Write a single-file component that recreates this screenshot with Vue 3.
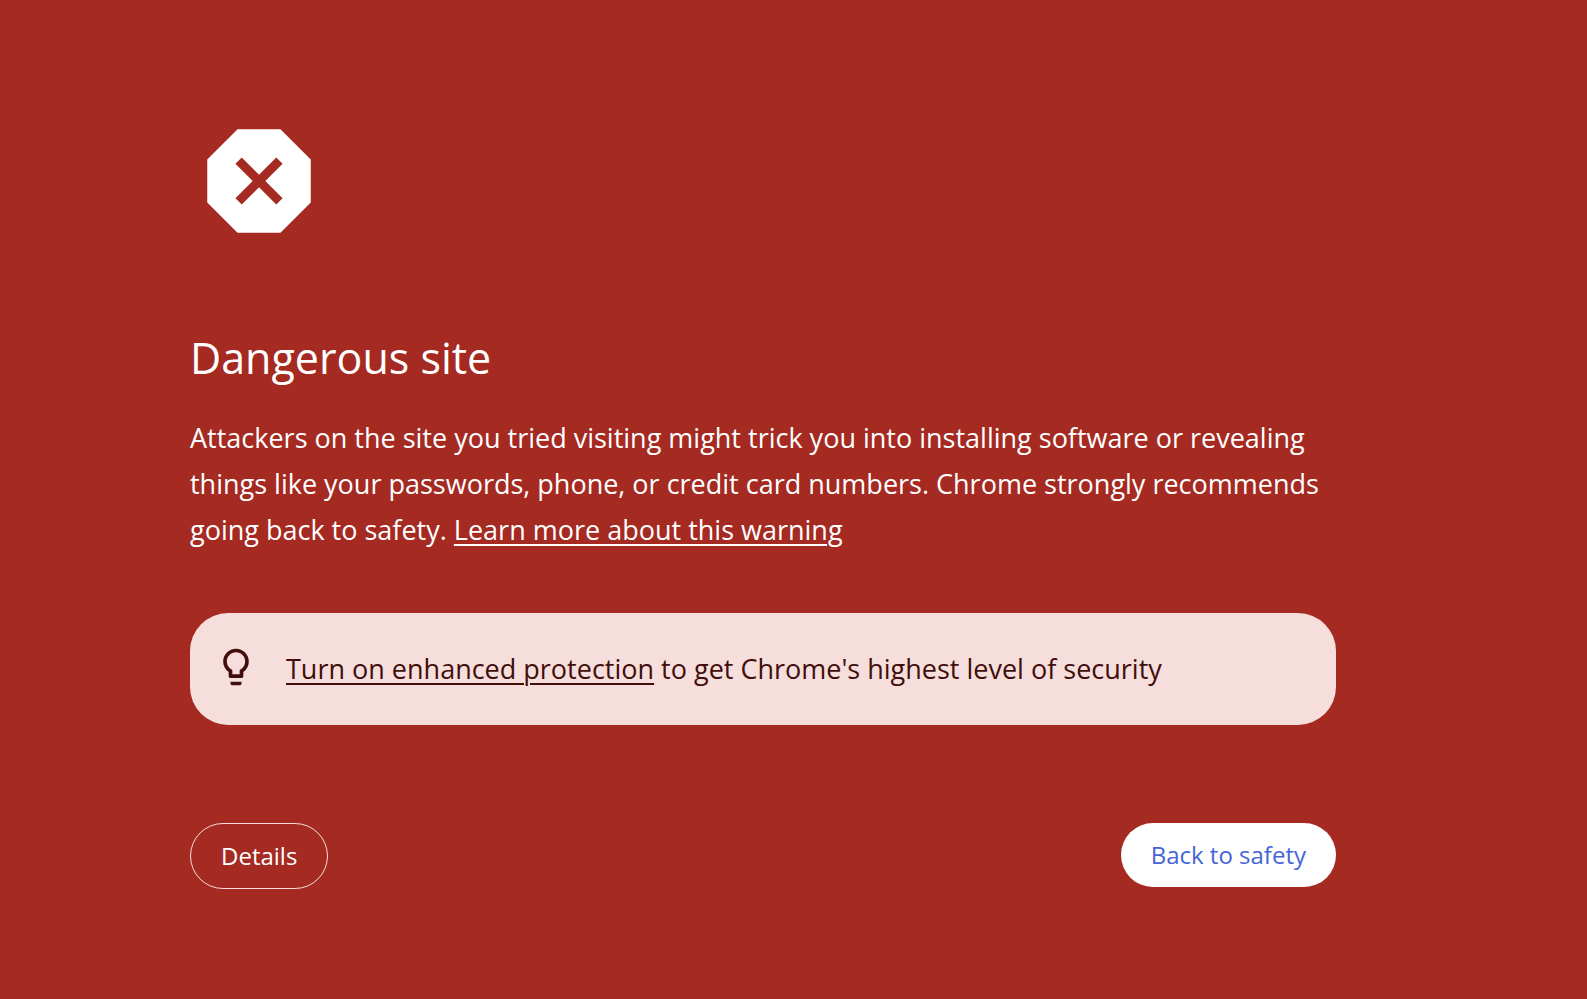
<template>
  <main class="interstitial">
    <!-- Warning octagon with the cross cut out -->
    <svg class="danger-icon" viewBox="0 0 24 24" fill="currentColor" aria-hidden="true">
      <path fill-rule="evenodd" d="M15.73 3H8.27L3 8.27v7.46L8.27 21h7.46L21 15.73V8.27L15.73 3zM9 7.9l3 3 3-3L16.1 9l-3 3 3 3-1.1 1.1-3-3-3 3L7.9 15l3-3-3-3L9 7.9z" />
    </svg>

    <h1 class="title">Dangerous site</h1>
    <p class="message">
      Attackers on the site you tried visiting might trick you into installing software or revealing things like your passwords, phone, or credit card numbers. Chrome strongly recommends going back to safety. <a href="#">Learn more about this warning</a>
    </p>

    <!-- Enhanced protection promo -->
    <div class="promo">
      <svg class="bulb-icon" viewBox="0 0 24 24" fill="currentColor" aria-hidden="true">
        <path d="M9 21c0 .55.45 1 1 1h4c.55 0 1-.45 1-1v-1H9v1zm3-19C8.14 2 5 5.14 5 9c0 2.38 1.19 4.47 3 5.74V17c0 .55.45 1 1 1h6c.55 0 1-.45 1-1v-2.26c1.81-1.27 3-3.36 3-5.74 0-3.86-3.14-7-7-7zm2.85 11.1l-.85.6V16h-4v-2.3l-.85-.6C7.8 12.16 7 10.63 7 9c0-2.76 2.24-5 5-5s5 2.24 5 5c0 1.63-.8 3.16-2.15 4.1z" />
      </svg>
      <p class="promo-text">
        <a href="#">Turn on enhanced protection</a> to get Chrome's highest level of security
      </p>
    </div>

    <div class="actions">
      <button type="button" class="btn details-btn">Details</button>
      <button type="button" class="btn safety-btn">Back to safety</button>
    </div>
  </main>
</template>

<script setup>
</script>

<style>
body {
  margin: 0;
  background: #a52a22;
}
</style>

<style scoped>
.interstitial {
  padding: 112px 251px 96px 190px;
  color: #fff;
  font-family: "Segoe UI", "Open Sans", "Noto Sans", sans-serif;
}

.danger-icon {
  display: block;
  width: 138px;
  height: 138px;
}

.title {
  margin: 76px 0 25px;
  font-size: 43px;
  font-weight: 400;
  line-height: 64px;
}

.message {
  margin: 0;
  font-size: 27px;
  line-height: 46px;
}

a {
  color: inherit;
  text-decoration-thickness: 2px;
  text-underline-offset: 4px;
}

.promo {
  display: flex;
  align-items: flex-start;
  gap: 28px;
  margin-top: 60px;
  padding: 32px 24px;
  border-radius: 38px;
  background: #f6dedc;
  color: #410e0b;
}

.bulb-icon {
  flex-shrink: 0;
  width: 44px;
  height: 44px;
}

.promo-text {
  margin: 0;
  font-size: 27px;
  line-height: 48px;
}

.actions {
  display: flex;
  justify-content: space-between;
  align-items: flex-start;
  margin-top: 98px;
}

.btn {
  padding: 0 30px;
  border: none;
  border-radius: 33px;
  font-family: inherit;
  font-size: 24px;
  line-height: 64px;
  cursor: pointer;
}

.details-btn {
  border: 1px solid #f6dedc;
  background: transparent;
  color: #fff;
}

.safety-btn {
  background: #fff;
  color: #4565d6;
}
</style>
